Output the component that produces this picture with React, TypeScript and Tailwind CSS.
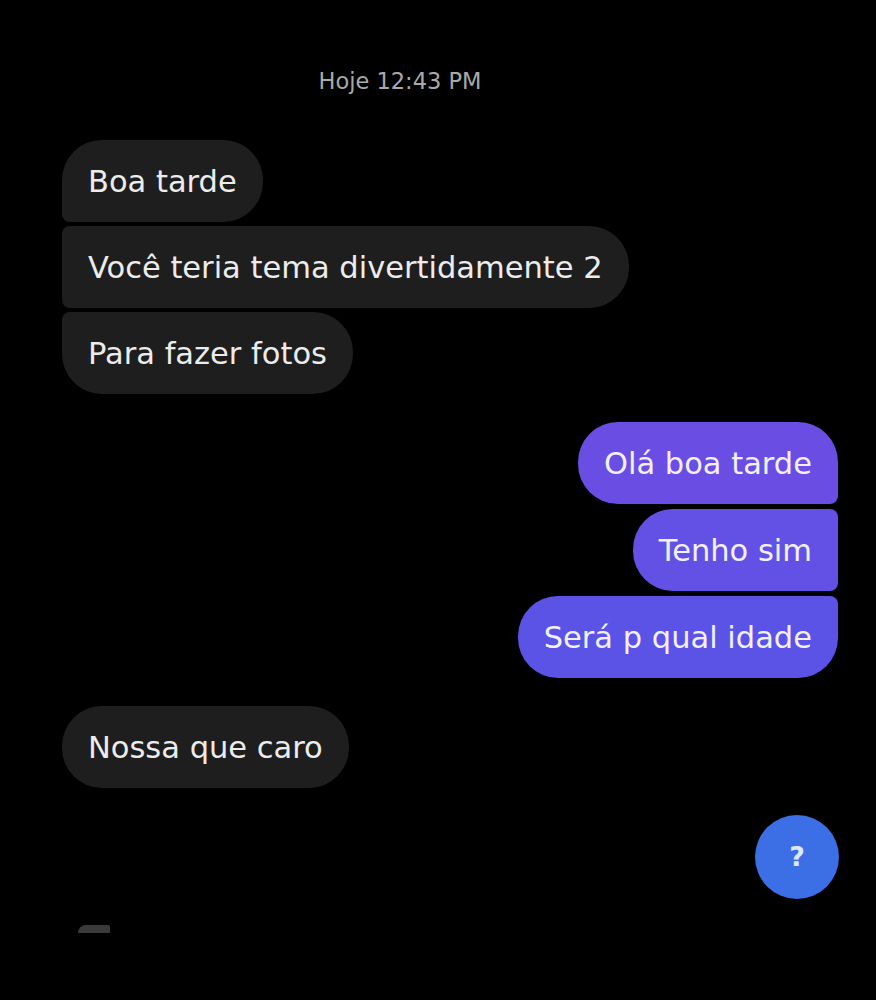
import React from 'react';

type Pos = 'first' | 'middle' | 'last' | 'single';

const received: Record<Pos, string> = {
  first: 'rounded-[40px] rounded-bl-[8px]',
  middle: 'rounded-[40px] rounded-l-[8px]',
  last: 'rounded-[40px] rounded-tl-[8px]',
  single: 'rounded-[40px]',
};

const sent: Record<Pos, string> = {
  first: 'rounded-[40px] rounded-br-[8px]',
  middle: 'rounded-[40px] rounded-r-[8px]',
  last: 'rounded-[40px] rounded-tr-[8px]',
  single: 'rounded-[40px]',
};

const Incoming = ({ text, pos }: { text: string; pos: Pos }) => (
  <div className={`self-start h-[82px] flex items-center pt-[3px] px-[26px] bg-[#1e1e1e] text-[#ececec] ${received[pos]}`}>
    {text}
  </div>
);

const Outgoing = ({ text, pos, bg }: { text: string; pos: Pos; bg: string }) => (
  <div className={`self-end h-[82px] flex items-center pt-[3px] px-[26px] text-[#f2f0ff] ${bg} ${sent[pos]}`}>
    {text}
  </div>
);

export default function App() {
  return (
    <div
      className="w-[876px] h-[1000px] bg-black overflow-hidden flex flex-col pl-[62px] pr-[38px] pt-[70px] text-[30.5px] leading-none"
      style={{ fontFamily: '"DejaVu Sans", "Open Sans", sans-serif' }}
    >
      <div className="self-center -translate-x-[50px] text-[22.5px] text-[#a9a9a9] mb-[47px]">Hoje 12:43 PM</div>

      {/* received */}
      <div className="flex flex-col gap-[4px]">
        <Incoming text="Boa tarde" pos="first" />
        <Incoming text="Você teria tema divertidamente 2" pos="middle" />
        <Incoming text="Para fazer fotos" pos="last" />
      </div>

      {/* sent */}
      <div className="flex flex-col gap-[5px] mt-[28px]">
        <Outgoing text="Olá boa tarde" pos="first" bg="bg-[#6a4de2]" />
        <Outgoing text="Tenho sim" pos="middle" bg="bg-[#6350e4]" />
        <Outgoing text="Será p qual idade" pos="last" bg="bg-[#5a53e6]" />
      </div>

      <div className="mt-[28px] flex flex-col">
        <Incoming text="Nossa que caro" pos="single" />
      </div>

      <div className="self-end mt-[27px] w-[84px] h-[84px] rounded-full bg-[#3c6ee6] flex items-center justify-center text-[27px] font-semibold text-[#dfe6ff] mr-[-1px]">
        ?
      </div>

      <div className="mt-[26px] ml-[16px] w-[32px] h-[8px] bg-[#3a3a3a] rounded-tl-[10px] rounded-tr-[2px]" />
    </div>
  );
}
